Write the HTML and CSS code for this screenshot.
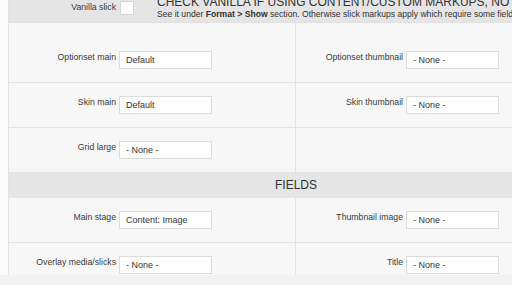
FILE: index.html
```html
<!DOCTYPE html>
<html lang="en">
<head>
    <meta charset="UTF-8">
    <title>Slick views - Optionsets</title>
    <link rel="stylesheet" href="styles.css">
</head>
<body>

    <div class="wrapper">
        <div class="form-box">

            <!-- Vanilla row -->
            <div class="top-row">
                <label class="form-label">Vanilla slick</label>
                <span class="checkbox"></span>
                <div class="top-text">
                    <h3>Check Vanilla if using content/custom markups, not fields</h3>
                    <p>See it under <b>Format &gt; Show</b> section. Otherwise slick markups apply which require some fields added below.</p>
                </div>
            </div>

            <!-- Optionsets -->
            <div class="row row-first">
                <div class="col">
                    <label class="form-label">Optionset main</label>
                    <div class="select">Default</div>
                </div>
                <div class="col">
                    <label class="form-label">Optionset thumbnail</label>
                    <div class="select">- None -</div>
                </div>
            </div>
            <div class="row">
                <div class="col">
                    <label class="form-label">Skin main</label>
                    <div class="select">Default</div>
                </div>
                <div class="col">
                    <label class="form-label">Skin thumbnail</label>
                    <div class="select">- None -</div>
                </div>
            </div>
            <div class="row">
                <div class="col">
                    <label class="form-label">Grid large</label>
                    <div class="select">- None -</div>
                </div>
                <div class="col"></div>
            </div>

            <div class="section-title">Fields</div>

            <div class="row">
                <div class="col">
                    <label class="form-label">Main stage</label>
                    <div class="select">Content: Image</div>
                </div>
                <div class="col">
                    <label class="form-label">Thumbnail image</label>
                    <div class="select">- None -</div>
                </div>
            </div>
            <div class="row row-last">
                <div class="col">
                    <label class="form-label">Overlay media/slicks</label>
                    <div class="select">- None -</div>
                </div>
                <div class="col">
                    <label class="form-label">Title</label>
                    <div class="select">- None -</div>
                </div>
            </div>

        </div>
    </div>

    <div class="footer"></div>

</body>
</html>
```

FILE: styles.css
```css
body {
    font-family: "Liberation Sans", Arial, sans-serif;
    background-color: #f2f2f0;
    color: #333;
    margin: 0;
    padding: 0;
    overflow: hidden;
}

.wrapper {
    background-color: #fbfbfb;
    padding-left: 8px;
    width: 600px;
}

/* Form box */
.form-box {
    width: 574px;
    background-color: #f7f7f7;
    border-left: 1px solid #e2e2e2;
}

.form-label {
    width: 107px;
    margin-right: 3px;
    text-align: right;
    font-size: 8.7px;
    line-height: 13px;
    color: #3a3a3a;
    flex-shrink: 0;
}

/* Vanilla row */
.top-row {
    display: flex;
    align-items: flex-start;
    height: 23px;
    background-color: #e5e5e5;
    border-bottom: 1px solid #e0e0e0;
    box-sizing: border-box;
}

.top-row .form-label {
    margin-top: 1px;
}

.checkbox {
    width: 12px;
    height: 12px;
    margin-top: 1px;
    margin-left: 1px;
    background: #fff;
    border: 1px solid #d6d6d6;
    flex-shrink: 0;
}

.top-text {
    margin-left: 23px;
    margin-top: -5px;
    white-space: nowrap;
}

.top-text h3 {
    margin: 0;
    font-size: 12px;
    font-weight: normal;
    text-transform: uppercase;
    line-height: 14px;
}

.top-text p {
    margin: 0;
    font-size: 8.6px;
    line-height: 10px;
}

/* Rows */
.row {
    display: flex;
    border-bottom: 1px solid #e4e4e4;
}

.col {
    width: 286px;
    display: flex;
    align-items: flex-start;
    padding: 13px 0;
}

.col:first-child {
    border-right: 1px solid #e4e4e4;
}

.row-first .col {
    padding-top: 28px;
}

.row-last {
    border-bottom: none;
}

.row-last .col {
    padding-bottom: 1px;
}

.select {
    width: 85px;
    height: 16px;
    border: 1px solid #dcdcdc;
    background: #fff;
    font-size: 9px;
    line-height: 17px;
    padding-left: 6px;
    white-space: nowrap;
}

.section-title {
    background-color: #e5e5e5;
    height: 25px;
    line-height: 25px;
    text-align: center;
    font-size: 12px;
    text-transform: uppercase;
}

.footer {
    height: 20px;
}
```
